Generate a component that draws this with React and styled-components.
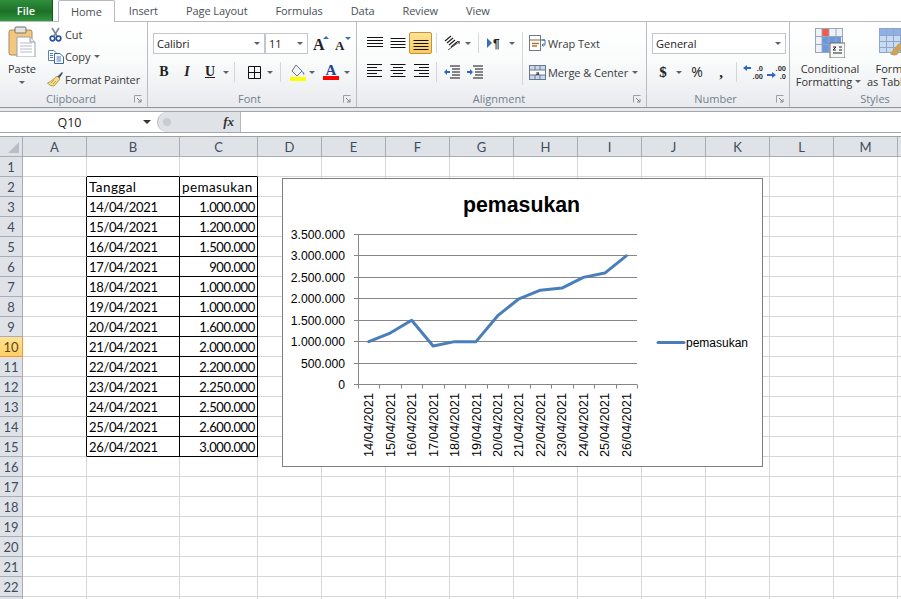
import React from "react";
import styled, { createGlobalStyle } from "styled-components";

const GlobalStyle = createGlobalStyle`
  html, body {
    margin: 0;
    padding: 0;
    background: #fff;
    overflow: hidden;
  }
  * { box-sizing: border-box; }
`;

const uiFont = `"Open Sans", "Liberation Sans", sans-serif`;
const cellFont = `Lato, "Liberation Sans", sans-serif`;

const Page = styled.div`
  width: 901px;
  height: 599px;
  overflow: hidden;
  background: #fff;
  font-family: ${uiFont};
  font-size: 11px;
  color: #3c3c3c;
`;

/* tab strip */
const TabBar = styled.div`
  display: flex;
  height: 22px;
  border-bottom: 1px solid #b6babf;
`;
const FileTab = styled.div`
  width: 53px;
  margin-right: 5px;
  display: flex;
  align-items: center;
  justify-content: center;
  color: #fff;
  font-weight: 600;
  background: linear-gradient(#2f8f3a, #1c6f28 55%, #2f9a3c);
  border-right: 1px solid #14561d;
`;
const Tab = styled.div`
  display: flex;
  align-items: center;
  padding: 0 ${(p) => (p.$active ? "12px" : "14px")};
  height: ${(p) => (p.$active ? "22px" : "21px")};
  background: ${(p) => (p.$active ? "#fff" : "transparent")};
  border: ${(p) => (p.$active ? "1px solid #b6babf" : "none")};
  border-bottom: none;
  border-radius: 2px 2px 0 0;
  color: #4a4f57;
  white-space: nowrap;
  letter-spacing: -0.08px;
`;

/* ribbon */
const Ribbon = styled.div`
  display: flex;
  height: 86px;
  overflow: hidden;
  background: linear-gradient(#fff, #fafbfb 45%, #e8eaee);
  border-bottom: 1px solid #8f9298;
`;
const Group = styled.div`
  flex: none;
  width: ${(p) => p.$w}px;
  display: flex;
  flex-direction: column;
  border-right: 1px solid #b9bcc1;
`;
const GroupBody = styled.div`
  flex: 1;
  display: flex;
  min-height: 0;
  padding-left: ${(p) => p.$pad || 0}px;
`;
const GroupFoot = styled.div`
  height: 15px;
  margin-bottom: 1px;
  display: grid;
  grid-template-columns: 1fr auto 1fr;
  align-items: center;
  color: #747e8e;
  line-height: 14px;
  padding-right: 5px;
`;
const Launcher = styled.svg`
  justify-self: end;
  width: 8px;
  height: 8px;
`;
const ColumnStack = styled.div`
  display: flex;
  flex-direction: column;
  padding-top: ${(p) => p.$top ?? 10}px;
  gap: ${(p) => p.$gap ?? 7}px;
`;
const ToolRow = styled.div`
  display: flex;
  align-items: center;
  height: 22px;
`;
const ToolBtn = styled.div`
  flex: none;
  width: ${(p) => p.$w || 22}px;
  height: 22px;
  display: flex;
  align-items: center;
  justify-content: center;
  border-radius: 2px;
  border: 1px solid ${(p) => (p.$active ? "#c2933d" : "transparent")};
  background: ${(p) => (p.$active ? "linear-gradient(#fde394, #fbcb5c)" : "none")};
`;
const Glyph = styled.span`
  font-family: ${(p) => p.$font || `"Liberation Serif", serif`};
  font-weight: ${(p) => p.$weight || 700};
  font-style: ${(p) => (p.$italic ? "italic" : "normal")};
  text-decoration: ${(p) => (p.$under ? "underline" : "none")};
  font-size: ${(p) => p.$size || 14}px;
  color: #222;
  line-height: 1;
`;
const Caret = styled.span`
  flex: none;
  width: 0;
  height: 0;
  margin: ${(p) => p.$mt || 0}px ${(p) => p.$mx ?? 3}px 0;
  border-left: ${(p) => (p.$dark ? 4 : 3)}px solid transparent;
  border-right: ${(p) => (p.$dark ? 4 : 3)}px solid transparent;
  border-top: ${(p) => (p.$dark ? 4 : 3)}px solid ${(p) => (p.$dark ? "#333" : "#5d6168")};
`;
const Sep = styled.div`
  flex: none;
  width: 1px;
  align-self: stretch;
  margin: ${(p) => (p.$full ? "10px" : "1px")} ${(p) => p.$mr ?? 4}px ${(p) => (p.$full ? "6px" : "1px")} ${(p) => p.$ml ?? 4}px;
  background: #d4d6da;
`;
const Combo = styled.div`
  flex: none;
  width: ${(p) => p.$w}px;
  height: 21px;
  display: flex;
  align-items: center;
  justify-content: space-between;
  padding: 0 2px 0 3px;
  background: #fff;
  border: 1px solid #c3c7cd;
  margin-right: ${(p) => p.$mr || 0}px;
  color: #222;
`;
const LargeAction = styled.div`
  flex: none;
  width: ${(p) => p.$w}px;
  display: flex;
  flex-direction: column;
  align-items: center;
  padding-top: ${(p) => p.$top ?? 4}px;
  line-height: 13px;
  white-space: nowrap;
  text-align: center;
`;
const LargeLabel = styled.div`
  margin-top: ${(p) => p.$mt ?? 5}px;
  display: flex;
  align-items: center;
  color: #333;
`;
const ActionList = styled.div`
  display: flex;
  flex-direction: column;
  padding: 1px 0 0 3px;
`;
const ActionRow = styled.div`
  height: 22.5px;
  display: flex;
  align-items: center;
  gap: 1px;
  white-space: nowrap;
  color: #3a3a3a;
  letter-spacing: -0.12px;
`;
const ActionIcon = styled.span`
  flex: none;
  width: 17px;
  display: flex;
  justify-content: center;
`;
const ActionText = styled.span`
  margin-left: 2px;
  white-space: nowrap;
  letter-spacing: -0.05px;
`;

/* formula bar */
const BarGap = styled.div`
  height: 3px;
  background: #e6e8ec;
`;
const FormulaBar = styled.div`
  display: flex;
  height: 22px;
  border-top: 1px solid #a3a6ac;
  border-bottom: 1px solid #a3a6ac;
`;
const NameBox = styled.div`
  flex: none;
  width: 157px;
  display: flex;
  align-items: center;
  padding-right: 2px;
  font-size: 12.5px;
  color: #222;
`;
const NameText = styled.div`
  flex: 1;
  text-align: center;
`;
const FxCapsule = styled.div`
  flex: none;
  width: 84px;
  display: flex;
  align-items: center;
  justify-content: space-between;
  padding: 0 6px 0 5px;
  background: #dfe2e6;
  border: 1px solid #b3b7bd;
  border-radius: 10px 0 0 10px;
  border-top: none;
  border-bottom: none;
`;
const Knob = styled.span`
  width: 8px;
  height: 8px;
  border-radius: 50%;
  background: #c9ccd1;
`;
const FxText = styled.span`
  font-family: "Liberation Serif", serif;
  font-style: italic;
  font-weight: 700;
  font-size: 13px;
  color: #333;
`;

/* sheet */
const SheetArea = styled.div`
  position: relative;
  margin-top: 3px;
  border-top: 1px solid #9ea1a7;
`;
const Sheet = styled.div`
  display: grid;
  grid-template-columns: 23px 64px 93px 78px repeat(10, 64px) 1fr;
  grid-auto-rows: 20px;
  font-family: ${cellFont};
  font-size: 13px;
`;
const HeadCell = styled.div`
  display: flex;
  align-items: center;
  justify-content: center;
  background: ${(p) => (p.$on ? "linear-gradient(#ffe294, #fdd068)" : "#dfe3e8")};
  border-right: 1px solid ${(p) => (p.$on ? "#f29536" : "#a9adb4")};
  border-bottom: 1px solid ${(p) => (p.$on ? "#f29536" : "#a9adb4")};
  color: ${(p) => (p.$on ? "#5e4510" : "#3f4c5d")};
`;
const Corner = styled(HeadCell)`
  align-items: flex-end;
  justify-content: flex-end;
  padding: 0 3px 3px 0;
`;
const CornerMark = styled.span`
  width: 11px;
  height: 11px;
  background: #b9bec5;
  clip-path: polygon(100% 0, 100% 100%, 0 100%);
`;
const Cell = styled.div`
  display: flex;
  align-items: center;
  justify-content: ${(p) => (p.$num ? "flex-end" : "flex-start")};
  padding: 0 2px;
  color: #000;
  white-space: nowrap;
  font-size: ${(p) => (p.$word ? "13.5px" : "13px")};
  letter-spacing: ${(p) => (p.$word ? "0.4px" : "-0.35px")};
  border-right: 1px solid ${(p) => (p.$blackR ? "#000" : "#d6d6d6")};
  border-bottom: 1px solid ${(p) => (p.$blackB ? "#000" : "#d6d6d6")};
`;
const ChartFrame = styled.div`
  position: absolute;
  left: 282px;
  top: 41px;
  width: 481px;
  height: 289px;
  background: #fff;
  border: 1px solid #7f7f7f;
`;
const ChartSvg = styled.svg`
  display: block;
  width: 479px;
  height: 287px;
  font-family: "Liberation Sans", Arial, sans-serif;
`;

const rows = [
  ["Tanggal", "pemasukan"],
  ["14/04/2021", "1.000.000"],
  ["15/04/2021", "1.200.000"],
  ["16/04/2021", "1.500.000"],
  ["17/04/2021", "900.000"],
  ["18/04/2021", "1.000.000"],
  ["19/04/2021", "1.000.000"],
  ["20/04/2021", "1.600.000"],
  ["21/04/2021", "2.000.000"],
  ["22/04/2021", "2.200.000"],
  ["23/04/2021", "2.250.000"],
  ["24/04/2021", "2.500.000"],
  ["25/04/2021", "2.600.000"],
  ["26/04/2021", "3.000.000"],
];
const columns = ["A", "B", "C", "D", "E", "F", "G", "H", "I", "J", "K", "L", "M", ""];

const LauncherIcon = () => (
  <Launcher viewBox="0 0 8 8">
    <path d="M0.5 7.5V0.5H7.5" fill="none" stroke="#9aa0a8" />
    <path d="M3 3L7 7M7 4V7H4" fill="none" stroke="#7f8791" />
  </Launcher>
);

const Lines = ({ widths, top = 0, align = "left", gap = 3 }) => (
  <svg width="16" height={top + widths.length * gap + 1}>
    {widths.map((w, i) => (
      <rect
        key={i}
        x={align === "left" ? 0 : align === "center" ? (16 - w) / 2 : 16 - w}
        y={top + i * gap}
        width={w}
        height="1"
        fill="#111"
      />
    ))}
  </svg>
);

const PasteIcon = () => (
  <svg width="28" height="31" viewBox="0 0 28 31">
    <rect x="1" y="4" width="23" height="25" rx="2" fill="#f2c77e" stroke="#a98a5c" />
    <rect x="7" y="1" width="11" height="6" rx="1" fill="#e3e3e3" stroke="#77736b" />
    <path d="M9 11H22L27 16V31H9Z" fill="#fff" stroke="#9aa0a8" />
    <path d="M22 11V16H27" fill="#e5e9ee" stroke="#9aa0a8" />
    <path d="M12 17H24M12 20H24M12 23H24M12 26H24" stroke="#b4bac2" />
  </svg>
);
const CutIcon = () => (
  <svg width="13" height="15" viewBox="0 0 13 15">
    <path d="M3 1L8 9M10 1L5 9" stroke="#7d8791" strokeWidth="1.6" fill="none" />
    <circle cx="3.5" cy="11.5" r="2.3" fill="none" stroke="#2a53a5" strokeWidth="1.7" />
    <circle cx="9.5" cy="11.5" r="2.3" fill="none" stroke="#2a53a5" strokeWidth="1.7" />
  </svg>
);
const CopyIcon = () => (
  <svg width="16" height="14" viewBox="0 0 16 14">
    <path d="M0.5 0.5H6L8 2.5V10.5H0.5Z" fill="#fff" stroke="#5c7fb5" />
    <path d="M6.5 3.5H12L15.5 7V13.5H6.5Z" fill="#fff" stroke="#3c66aa" />
    <path d="M2 3.5H5M2 5.5H5M2 7.5H5M8.5 7H13M8.5 9H13M8.5 11H13" stroke="#4f79bb" />
  </svg>
);
const BrushIcon = () => (
  <svg width="17" height="16" viewBox="0 0 17 16">
    <path d="M10 5L13 8L7 15C4 15 2 14 0.5 12C3 11 6 9 10 5Z" fill="#f3dc86" stroke="#b39a4b" />
    <path d="M10.5 5.5L15 1L16 2L12.5 7Z" fill="#4c4f73" />
    <path d="M4 12L7 9M6 13L9 10" stroke="#c3a94f" />
  </svg>
);
const BordersIcon = () => (
  <svg width="13" height="13" viewBox="0 0 13 13">
    <path d="M0.5 0.5H12.5V12.5H0.5ZM6.5 0.5V12.5M0.5 6.5H12.5" fill="none" stroke="#111" />
  </svg>
);
const FillIcon = () => (
  <svg width="16" height="17" viewBox="0 0 16 17">
    <path d="M6 1L12 7L7 12L2 7Z" fill="#f5f6f8" stroke="#687283" />
    <path d="M12 7C14 8 15 10 14 11C13 10 12.5 9 12 7Z" fill="#4a7bc0" />
    <rect x="0" y="13" width="16" height="4" fill="#ffff00" />
  </svg>
);
const FontColorIcon = () => (
  <svg width="16" height="20" viewBox="0 0 16 20">
    <text x="8" y="13" textAnchor="middle" fontFamily="Liberation Serif" fontWeight="700" fontSize="15" fill="#23408a">A</text>
    <rect x="0" y="14" width="16" height="4" fill="#ff0000" />
  </svg>
);
const GrowIcon = ({ up }) => (
  <svg width="17" height="20" viewBox="0 0 17 20">
    <text x="0" y="17" fontFamily="Liberation Serif" fontWeight="700" fontSize={up ? 16 : 13} fill="#222">A</text>
    <path d={up ? "M10 6L13 3L16 6Z" : "M10 4H16L13 7Z"} fill="#3d6db5" />
  </svg>
);
const OrientationIcon = () => (
  <svg width="17" height="16" viewBox="0 0 17 16">
    <path d="M1 6L7 1M3 8L9 3M5 10L11 5M7 12L13 7" stroke="#222" strokeWidth="1.2" />
    <path d="M4 15L15 7M13 6.5L15.5 6.5L15 9" stroke="#555" fill="none" />
  </svg>
);
const ParagraphIcon = () => (
  <svg width="17" height="16" viewBox="0 0 17 16">
    <path d="M0 3L5 8L0 13Z" fill="#3d6db5" />
    <text x="6" y="13" fontFamily="Liberation Sans" fontWeight="700" fontSize="12" fill="#222">¶</text>
  </svg>
);
const IndentIcon = ({ rev }) => (
  <svg width="16" height="15" viewBox="0 0 16 15">
    <path d="M6 1H16M8 4H16M8 7H16M8 10H16M6 13H16" stroke="#111" />
    <path d={rev ? "M0 7L3 4V6H6V8H3V10Z" : "M6 7L3 4V6H0V8H3V10Z"} fill="#2f66c4" />
  </svg>
);
const WrapIcon = () => (
  <svg width="17" height="16" viewBox="0 0 17 16">
    <rect x="0.5" y="0.5" width="11" height="15" fill="#fff" stroke="#6f7987" />
    <path d="M0.5 5H16" stroke="#7d6b4d" />
    <path d="M3 8.5H10M3 11H8" stroke="#b5762c" strokeWidth="1.3" />
    <path d="M13 5H16V10H13M14.5 8.5L13 10L14.5 11.5" stroke="#3d6db5" fill="none" />
  </svg>
);
const MergeIcon = () => (
  <svg width="17" height="15" viewBox="0 0 17 15">
    <rect x="0.5" y="0.5" width="16" height="14" fill="#c9d8ec" stroke="#68788f" />
    <rect x="1" y="5" width="15" height="5" fill="#fff" />
    <path d="M6 0.5V5M11 0.5V5M6 10V14.5M11 10V14.5M0.5 5H16.5M0.5 10H16.5" stroke="#68788f" />
    <text x="8.5" y="9.5" textAnchor="middle" fontFamily="Liberation Serif" fontWeight="700" fontSize="7" fill="#222">a</text>
  </svg>
);
const DecimalIcon = ({ more }) => (
  <svg width="20" height="15" viewBox="0 0 20 15" fontFamily="Liberation Sans" fontWeight="700" fontSize="7.5" fill="#333">
    <text x="20" y="6" textAnchor="end">{more ? ".0" : ".00"}</text>
    <text x="20" y="14" textAnchor="end">{more ? ".00" : ".0"}</text>
    <path d={more ? "M0 3L4 0V2H8V4H4V6Z" : "M10 10L6 7V9H1V11H6V13Z"} fill="#2f66c4" />
  </svg>
);
const CondFormatIcon = () => (
  <svg width="30" height="30" viewBox="0 0 30 30">
    <rect x="0.5" y="0.5" width="27" height="24" fill="#eef2f8" stroke="#9aa7ba" />
    <rect x="7" y="1" width="7" height="8" fill="#ee5d47" />
    <rect x="7" y="9" width="19" height="7" fill="#6a98e0" />
    <rect x="7" y="16" width="7" height="8" fill="#6a98e0" />
    <path d="M7 0.5V24.5M14 0.5V24.5M21 0.5V24.5M0.5 8.5H27.5M0.5 16.5H27.5" stroke="#9aa7ba" />
    <rect x="15" y="15" width="15" height="15" fill="#f6f6f6" stroke="#6b6b6b" />
    <path d="M18 19H21L18 22H21M18 25H27M24 19H27M24 22H27" stroke="#222" fill="none" />
  </svg>
);
const TableStyleIcon = () => (
  <svg width="30" height="30" viewBox="0 0 30 30">
    <rect x="0.5" y="0.5" width="29" height="24" fill="#c9daf3" stroke="#8da6c9" />
    <rect x="1" y="1" width="28" height="6" fill="#8fb1e4" />
    <path d="M7.5 0.5V24.5M14.5 0.5V24.5M21.5 0.5V24.5M0.5 7.5H29.5M0.5 13.5H29.5M0.5 19.5H29.5" stroke="#8da6c9" />
    <path d="M13 23L20 15L24 18L18 27C15 28 12 27 11 26Z" fill="#c8a45a" />
    <path d="M22 15L28 8L29 9L25 18Z" fill="#55729c" />
  </svg>
);

const values = [1000000, 1200000, 1500000, 900000, 1000000, 1000000, 1600000, 2000000, 2200000, 2250000, 2500000, 2600000, 3000000];
const axisTop = 234.5;
const axisBottom = 384.5;
const axisLeft = 358;
const axisRight = 637;
const step = (axisRight - axisLeft) / 13;
const yFor = (v) => axisBottom - (v / 3500000) * (axisBottom - axisTop);
const xFor = (i) => axisLeft + step * (i + 0.5);
const ticks = [
  "0",
  "500.000",
  "1.000.000",
  "1.500.000",
  "2.000.000",
  "2.500.000",
  "3.000.000",
  "3.500.000",
];

const Chart = () => (
  <ChartFrame>
    <ChartSvg viewBox="283 179 479 287">
      <text x="521.5" y="212" textAnchor="middle" fontWeight="700" fontSize="21.3" fill="#000">
        pemasukan
      </text>
      {ticks.map((t, i) => {
        const y = Math.floor(axisBottom - i * 21.43) + 0.5;
        return (
          <g key={t}>
            <path d={`M${axisLeft - 4} ${y}H${axisRight}`} stroke="#868686" />
            <text x="345" y={y + 4.5} textAnchor="end" fontSize="12.2" fill="#000">
              {t}
            </text>
          </g>
        );
      })}
      <path d={`M${axisLeft + 0.5} ${axisTop}V${axisBottom + 4}`} stroke="#868686" fill="none" />
      {values.map((_, i) => (
        <path
          key={i}
          d={`M${Math.round(axisLeft + step * (i + 1)) + 0.5} ${axisBottom}v4`}
          stroke="#868686"
        />
      ))}
      <polyline
        points={values.map((v, i) => `${xFor(i)},${yFor(v)}`).join(" ")}
        fill="none"
        stroke="#4a7ebb"
        strokeWidth="3"
        strokeLinejoin="round"
        strokeLinecap="round"
      />
      {values.map((_, i) => (
        <text
          key={i}
          transform={`translate(${xFor(i) + 4.5} 457) rotate(-90)`}
          fontSize="12.8"
          fill="#000"
        >
          {rows[i + 1][0]}
        </text>
      ))}
      <path d="M658 342.5H684" stroke="#4a7ebb" strokeWidth="3" strokeLinecap="round" />
      <text x="686" y="347" fontSize="12" fill="#000">
        pemasukan
      </text>
    </ChartSvg>
  </ChartFrame>
);

const SheetGrid = () => {
  const body = [];
  for (let r = 1; r <= 23; r++) {
    body.push(
      <HeadCell key={`h${r}`} $on={r === 10}>
        {r <= 22 ? r : ""}
      </HeadCell>
    );
    columns.forEach((c, ci) => {
      const inTable = r >= 2 && r <= 15;
      const data = inTable && (ci === 1 || ci === 2) ? rows[r - 2][ci - 1] : "";
      body.push(
        <Cell
          key={`${c}${r}`}
          $num={ci === 2 && r > 2}
          $word={r === 2}
          $blackR={inTable && ci <= 2}
          $blackB={r <= 15 && (ci === 1 || ci === 2)}
        >
          {data}
        </Cell>
      );
    });
  }
  return (
    <Sheet>
      <Corner>
        <CornerMark />
      </Corner>
      {columns.map((c, i) => (
        <HeadCell key={i}>{c}</HeadCell>
      ))}
      {body}
    </Sheet>
  );
};

const App = () => (
  <Page>
    <GlobalStyle />
    <TabBar>
      <FileTab>File</FileTab>
      <Tab $active>Home</Tab>
      <Tab>Insert</Tab>
      <Tab>Page Layout</Tab>
      <Tab>Formulas</Tab>
      <Tab>Data</Tab>
      <Tab>Review</Tab>
      <Tab>View</Tab>
    </TabBar>

    <Ribbon>
      <Group $w={148}>
        <GroupBody>
          <LargeAction $w={44}>
            <PasteIcon />
            <LargeLabel $mt={5}>Paste</LargeLabel>
            <Caret $mx={0} $mt={6} />
          </LargeAction>
          <ActionList>
            <ActionRow>
              <ActionIcon><CutIcon /></ActionIcon>
              Cut
            </ActionRow>
            <ActionRow>
              <ActionIcon><CopyIcon /></ActionIcon>
              Copy
              <Caret />
            </ActionRow>
            <ActionRow>
              <ActionIcon><BrushIcon /></ActionIcon>
              Format Painter
            </ActionRow>
          </ActionList>
        </GroupBody>
        <GroupFoot>
          <span />
          Clipboard
          <LauncherIcon />
        </GroupFoot>
      </Group>

      <Group $w={209}>
        <GroupBody $pad={5}>
          <ColumnStack>
            <ToolRow>
              <Combo $w={112}>
                Calibri
                <Caret $mx={2} />
              </Combo>
              <Combo $w={43} $mr={2}>
                11
                <Caret $mx={2} />
              </Combo>
              <ToolBtn $w={22}><GrowIcon up /></ToolBtn>
              <ToolBtn $w={22}><GrowIcon /></ToolBtn>
            </ToolRow>
            <ToolRow>
              <ToolBtn $w={22}><Glyph>B</Glyph></ToolBtn>
              <ToolBtn $w={24}><Glyph $italic>I</Glyph></ToolBtn>
              <ToolBtn $w={22}><Glyph $under>U</Glyph></ToolBtn>
              <Caret $mx={2} />
              <Sep $ml={3} $mr={8} />
              <ToolBtn $w={22}><BordersIcon /></ToolBtn>
              <Caret $mx={2} />
              <Sep $ml={5} $mr={7} />
              <ToolBtn $w={19}><FillIcon /></ToolBtn>
              <Caret $mx={2} />
              <ToolBtn $w={27}><FontColorIcon /></ToolBtn>
              <Caret $mx={0} />
            </ToolRow>
          </ColumnStack>
        </GroupBody>
        <GroupFoot>
          <span />
          Font
          <LauncherIcon />
        </GroupFoot>
      </Group>

      <Group $w={290}>
        <GroupBody $pad={6}>
          <ColumnStack>
            <ToolRow>
              <ToolBtn $w={23}><Lines widths={[16, 16, 16, 16]} /></ToolBtn>
              <ToolBtn $w={23}><Lines widths={[15, 15, 15, 15]} top={2} align="center" /></ToolBtn>
              <ToolBtn $w={23} $active><Lines widths={[15, 15, 15, 15]} top={6} align="center" /></ToolBtn>
              <Sep $ml={4} $mr={4} />
              <ToolBtn $w={22}><OrientationIcon /></ToolBtn>
              <Caret $mx={2} />
              <Sep $ml={5} $mr={5} />
              <ToolBtn $w={22}><ParagraphIcon /></ToolBtn>
              <Caret $mx={3} />
            </ToolRow>
            <ToolRow>
              <ToolBtn $w={23}><Lines widths={[15, 10, 15, 10, 15]} /></ToolBtn>
              <ToolBtn $w={23}><Lines widths={[15, 10, 15, 10, 15]} align="center" /></ToolBtn>
              <ToolBtn $w={23}><Lines widths={[15, 10, 15, 10, 15]} align="right" /></ToolBtn>
              <Sep $ml={4} $mr={4} />
              <ToolBtn $w={22}><IndentIcon rev /></ToolBtn>
              <ToolBtn $w={24}><IndentIcon /></ToolBtn>
            </ToolRow>
          </ColumnStack>
          <Sep $full $ml={4} $mr={6} />
          <ColumnStack>
            <ToolRow>
              <ActionIcon><WrapIcon /></ActionIcon>
              <ActionText>Wrap Text</ActionText>
            </ToolRow>
            <ToolRow>
              <ActionIcon><MergeIcon /></ActionIcon>
              <ActionText>Merge &amp; Center</ActionText>
              <Caret $mx={4} />
            </ToolRow>
          </ColumnStack>
        </GroupBody>
        <GroupFoot>
          <span />
          Alignment
          <LauncherIcon />
        </GroupFoot>
      </Group>

      <Group $w={143}>
        <GroupBody $pad={5}>
          <ColumnStack>
            <ToolRow>
              <Combo $w={134}>
                General
                <Caret $mx={2} />
              </Combo>
            </ToolRow>
            <ToolRow>
              <ToolBtn $w={22}><Glyph $size={15}>$</Glyph></ToolBtn>
              <Caret $mx={2} />
              <ToolBtn $w={26}><Glyph $font={uiFont} $weight={400} $size={14}>%</Glyph></ToolBtn>
              <ToolBtn $w={22}><Glyph $size={15}>,</Glyph></ToolBtn>
              <Sep $ml={4} $mr={5} />
              <ToolBtn $w={22}><DecimalIcon more /></ToolBtn>
              <ToolBtn $w={24}><DecimalIcon /></ToolBtn>
            </ToolRow>
          </ColumnStack>
        </GroupBody>
        <GroupFoot>
          <span />
          Number
          <LauncherIcon />
        </GroupFoot>
      </Group>

      <Group $w={176}>
        <GroupBody>
          <LargeAction $w={80} $top={6}>
            <CondFormatIcon />
            <LargeLabel $mt={4}>Conditional</LargeLabel>
            <LargeLabel $mt={0}>Formatting<Caret $mx={3} /></LargeLabel>
          </LargeAction>
          <LargeAction $w={48} $top={6}>
            <TableStyleIcon />
            <LargeLabel $mt={4}>Format</LargeLabel>
            <LargeLabel $mt={0}>as Table<Caret $mx={3} /></LargeLabel>
          </LargeAction>
        </GroupBody>
        <GroupFoot>
          <span />
          Styles
          <span />
        </GroupFoot>
      </Group>
    </Ribbon>

    <BarGap />
    <FormulaBar>
      <NameBox>
        <NameText>Q10</NameText>
        <Caret $dark $mx={4} />
      </NameBox>
      <FxCapsule>
        <Knob />
        <FxText>fx</FxText>
      </FxCapsule>
    </FormulaBar>

    <SheetArea>
      <SheetGrid />
      <Chart />
    </SheetArea>
  </Page>
);

export default App;
